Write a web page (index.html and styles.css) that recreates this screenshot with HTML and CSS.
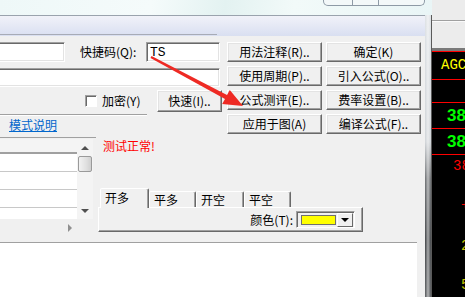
FILE: index.html
```html
<!DOCTYPE html>
<html>
<head>
<meta charset="utf-8">
<link rel="stylesheet" href="styles.css">
</head>
<body>
<div class="screen">
  <div class="win">
    <div class="titlebar">
      <div class="caption"><span class="cb cb1"></span><span class="cb cb2"></span><span class="cb cb3"></span></div>
    </div>
    <div class="frame">
      <div class="client">
        <div class="band"><div class="bandline"></div></div>
        <div class="body">
          <div class="top">
            <div class="left">
              <div class="row r1">
                <div class="input i1"></div>
                <span class="lbl">快捷码(Q):</span>
                <div class="input i2">TS</div>
              </div>
              <div class="row r2"><div class="input i3"></div></div>
              <div class="row r3">
                <span class="chk"></span>
                <span class="chklbl">加密(Y)</span>
                <div class="btn quick">快速(I)..</div>
              </div>
              <div class="sep"></div>
              <div class="linkrow"><span class="link">模式说明</span></div>
            </div>
            <div class="btns">
              <div class="btn">用法注释(R)..</div>
              <div class="btn">确定(K)</div>
              <div class="btn">使用周期(P)..</div>
              <div class="btn">引入公式(O)..</div>
              <div class="btn">公式测评(E)..</div>
              <div class="btn">费率设置(B)..</div>
              <div class="btn">应用于图(A)</div>
              <div class="btn">编译公式(F)..</div>
            </div>
          </div>
          <div class="mid">
            <div class="list">
              <div class="lcontent">
                <div class="lhead"></div>
                <div class="lrow"></div>
                <div class="lrow"></div>
                <div class="lrow"></div>
                <div class="lrow"></div>
              </div>
              <div class="vscroll">
                <div class="sarrow"><span class="tri-up"></span></div>
                <div class="thumb"></div>
                <div class="sfill"></div>
                <div class="sarrow"><span class="tri-down"></span></div>
              </div>
              <div class="hscroll"><span class="tri-right"></span></div>
              <div class="corner"></div>
            </div>
            <div class="test">
              <div class="ok">测试正常!</div>
              <div class="tabs">
                <div class="tab sel">开多</div>
                <div class="tab t2">平多</div>
                <div class="tab t3">开空</div>
                <div class="tab t4">平空</div>
              </div>
              <div class="panel">
                <span class="clbl">颜色(T):</span>
                <div class="combo">
                  <span class="swatch"></span>
                  <span class="ddbtn"><span class="tri-dd"></span></span>
                </div>
              </div>
            </div>
          </div>
          <div class="bottom"></div>
        </div>
      </div>
      <div class="rborder"></div>
    </div>
  </div>
  <div class="side">
    <div class="sidetop"><div class="sideline"></div></div>
    <div class="quote">
      <div class="q q-agc">AGC</div>
      <div class="q q-empty"></div>
      <div class="q q-g">38</div>
      <div class="q q-g">38</div>
      <div class="q q-r">38</div>
      <div class="q-plus">+</div>
      <div class="q-y q-y1">2</div>
      <div class="q-y q-y2">5</div>
    </div>
  </div>
  <svg class="arrow" width="465" height="297" viewBox="0 0 465 297">
    <polygon points="151.5,56.1 227,95.1 229.8,89.9 243,106 222.2,104.1 225,98.9 150.5,57.9" fill="#ee2a24"/>
  </svg>
</div>
</body>
</html>
```

FILE: styles.css
```css
* { box-sizing: border-box; }
html, body { margin: 0; padding: 0; }
body {
  width: 465px;
  height: 297px;
  overflow: hidden;
  background: #f0f0f0;
  font: 12px/14px "Noto Sans CJK SC", sans-serif;
  color: #000;
}
.screen { position: relative; display: flex; width: 465px; height: 297px; }

.win { width: 432px; display: flex; flex-direction: column; }
.titlebar {
  height: 15px;
  background: linear-gradient(100deg, #eef8f8 0%, #f5fbfb 35%, #e3f2f1 52%, #f2faf9 68%, #e9f5f6 100%);
  display: flex;
  justify-content: flex-end;
  padding-right: 7px;
}
.caption {
  display: flex;
  width: 102px;
  height: 6px;
  border: 1px solid #8e9aa6;
  border-top: none;
  border-radius: 0 0 5px 5px;
  background: #f3f8f9;
  overflow: hidden;
}
.cb { height: 100%; }
.cb1 { width: 29px; border-right: 1px solid #8e9aa6; }
.cb2 { width: 26px; border-right: 1px solid #8e9aa6; }
.cb3 { flex: 1; }

.frame { flex: 1; display: flex; }
.client {
  width: 425px;
  display: flex;
  flex-direction: column;
  border-top: 1px solid #9aa3ad;
}
.band {
  height: 20px;
  background: linear-gradient(#f1f2f9, #d9dff1);
  display: flex;
  flex-direction: column;
  justify-content: flex-end;
  padding-bottom: 1px;
}
.bandline { width: 217px; height: 1px; background: #a7abb6; }

.body { flex: 1; display: flex; flex-direction: column; background: #f0f0f0; }
.top { display: flex; height: 98px; }
.left { width: 222px; display: flex; flex-direction: column; padding-top: 6px; }
.row { display: flex; align-items: center; }
.r1 { height: 20px; }
.input {
  height: 100%;
  background: #fff;
  border: 1px solid;
  border-color: #a0a0a0 #fff #fff #a0a0a0;
  box-shadow: inset 1px 1px #696969, inset -1px -1px #e3e3e3;
}
.i1 { width: 70px; margin-left: -5px; }
.lbl { width: 81px; padding-left: 15px; }
.i2 {
  width: 74px;
  padding: 3px 0 0 3px;
  font: 13px/13px "Liberation Mono", monospace;
}
.r2 { margin-top: 6px; height: 19px; }
.i3 { width: 225px; margin-left: -5px; }
.r3 { margin-top: 3px; height: 22px; }
.chk {
  width: 12px;
  height: 12px;
  margin-left: 85px;
  background: #fff;
  border: 1px solid;
  border-color: #a0a0a0 #fff #fff #a0a0a0;
  box-shadow: inset 1px 1px #696969;
}
.chklbl { margin-left: 5px; }
.quick { margin-left: auto; width: 65px; height: 22px; }
.sep {
  margin-top: 2px;
  width: 147px;
  border-top: 1px solid #a0a0a0;
  border-bottom: 1px solid #fff;
}
.linkrow { height: 18px; padding-left: 9px; display: flex; align-items: center; }
.link { color: #0066cc; text-decoration: underline; }

.btns {
  margin-left: 5px;
  padding-top: 6px;
  display: grid;
  grid-template-columns: 95px 95px;
  grid-auto-rows: 20px;
  gap: 4px;
}
.btn {
  background: #f0f0f0;
  border: 1px solid;
  border-color: #fff #696969 #696969 #fff;
  box-shadow: inset -1px -1px #a0a0a0, inset 1px 1px #e3e3e3;
  display: flex;
  align-items: center;
  justify-content: center;
  white-space: nowrap;
}

.mid { display: flex; height: 108px; }
.list {
  margin-top: 3px;
  width: 96px;
  height: 99px;
  border-top: 1px solid #a0a0a0;
  padding: 1px 3px 0 0;
  display: grid;
  grid-template-columns: 77px 16px;
  grid-template-rows: 80px 17px;
}
.lcontent { background: #fff; display: flex; flex-direction: column; overflow: hidden; }
.lhead {
  height: 15px;
  flex: none;
  background: #f4f4f4;
  border-bottom: 2px solid #a0a0a0;
}
.lrow { height: 18px; flex: none; border-bottom: 1px solid #c8c8c8; }
.vscroll {
  background: #f4f4f4;
  display: flex;
  flex-direction: column;
}
.sarrow { height: 17px; display: flex; align-items: center; justify-content: center; }
.tri-up {
  width: 0; height: 0;
  border-left: 4px solid transparent;
  border-right: 4px solid transparent;
  border-bottom: 4px solid #505050;
}
.tri-down {
  width: 0; height: 0;
  border-left: 4px solid transparent;
  border-right: 4px solid transparent;
  border-top: 4px solid #505050;
}
.thumb {
  height: 16px;
  margin: 0 1px;
  border: 1px solid #9a9a9a;
  border-radius: 2px;
  background: linear-gradient(90deg, #f2f2f2, #e0e0e0 60%, #d0d0d0);
}
.sfill { flex: 1; }
.hscroll {
  background: #f0f0f0;
  display: flex;
  justify-content: flex-end;
  align-items: center;
  padding-right: 5px;
}
.tri-right {
  width: 0; height: 0;
  border-top: 4px solid transparent;
  border-bottom: 4px solid transparent;
  border-left: 4px solid #909090;
}
.corner { background: #f0f0f0; }

.test { margin-left: 2px; width: 265px; display: flex; flex-direction: column; }
.ok { color: #ff0000; margin-top: 5px; padding-left: 5px; height: 13px; line-height: 13px; }
.tabs { margin-top: 36px; height: 19px; display: flex; align-items: flex-end; padding-left: 2px; }
.tab {
  height: 16px;
  border: 1px solid;
  border-bottom: none;
  border-color: #fff #696969 transparent #fff;
  box-shadow: inset -1px 0 #a0a0a0;
  border-radius: 2px 2px 0 0;
  padding-left: 4px;
  line-height: 15px;
  background: #f0f0f0;
}
.tab.sel {
  width: 49px;
  height: 20px;
  margin-bottom: -1px;
  position: relative;
  z-index: 1;
  line-height: 17px;
}
.t2 { width: 47px; }
.t3 { width: 48px; }
.t4 { width: 47px; }
.panel {
  height: 25px;
  border: 1px solid;
  border-color: #fff #696969 #696969 #fff;
  box-shadow: inset -1px -1px #a0a0a0;
  display: flex;
  justify-content: flex-end;
  align-items: center;
  padding-right: 7px;
}
.clbl { margin-right: 3px; }
.combo {
  width: 59px;
  height: 17px;
  background: #f0f0f0;
  border: 1px solid;
  border-color: #a0a0a0 #fff #fff #a0a0a0;
  box-shadow: inset 1px 1px #696969;
  display: flex;
  align-items: center;
  padding: 1px 1px 1px 4px;
}
.swatch {
  width: 35px;
  height: 10px;
  background: #ffff00;
  border: 1px solid #707070;
}
.ddbtn {
  margin-left: auto;
  width: 16px;
  height: 14px;
  border: 1px solid;
  border-color: #fff #696969 #696969 #fff;
  display: flex;
  align-items: center;
  justify-content: center;
}
.tri-dd {
  width: 0; height: 0;
  border-left: 4px solid transparent;
  border-right: 4px solid transparent;
  border-top: 4px solid #000;
}
.bottom {
  flex: 1;
  width: 417px;
  background: #fff;
  border-top: 1px solid #a0a0a0;
}

.rborder {
  width: 7px;
  border-right: 1px solid #5a5a5a;
  background:
    linear-gradient(90deg, rgba(255,255,255,0) 0, rgba(255,255,255,0.55) 50%, rgba(255,255,255,0) 100%),
    linear-gradient(180deg, #dde1e5 0, #cfd3d7 45%, #6a6d70 58%, #3e4144 80%, #55585b 100%);
}

.side { width: 33px; display: flex; flex-direction: column; }
.sidetop { height: 48px; background: #ececec; padding-top: 20px; }
.sideline { height: 2px; border-top: 1px solid #a0a0a0; border-bottom: 1px solid #fafafa; }
.quote {
  flex: 1;
  background: #000;
  border-top: 3px solid #7a7a7a;
  display: flex;
  flex-direction: column;
  overflow: hidden;
  white-space: nowrap;
}
.q { border-top: 1px solid #ff0000; flex: none; }
.q-agc {
  height: 28px;
  padding: 5px 0 0 9px;
  color: #ffff00;
  font: 14px/16px "Liberation Mono", monospace;
}
.q-empty { height: 23px; }
.q-g {
  height: 26px;
  padding: 5px 0 0 15px;
  color: #00ff00;
  font: bold 17px/16px "Liberation Sans", sans-serif;
}
.q-r {
  height: 40px;
  padding: 4px 0 0 21px;
  color: #ff0000;
  font: 14px/14px "Liberation Mono", monospace;
}
.q-plus {
  padding: 4px 0 0 29px;
  color: #ff0000;
  font: 14px/14px "Liberation Mono", monospace;
}
.q-y {
  padding-left: 29px;
  color: #c8c800;
  font: 14px/14px "Liberation Mono", monospace;
}
.q-y1 { margin-top: 27px; }
.q-y2 { margin-top: 25px; }

.arrow { position: absolute; left: 0; top: 0; pointer-events: none; }
```
